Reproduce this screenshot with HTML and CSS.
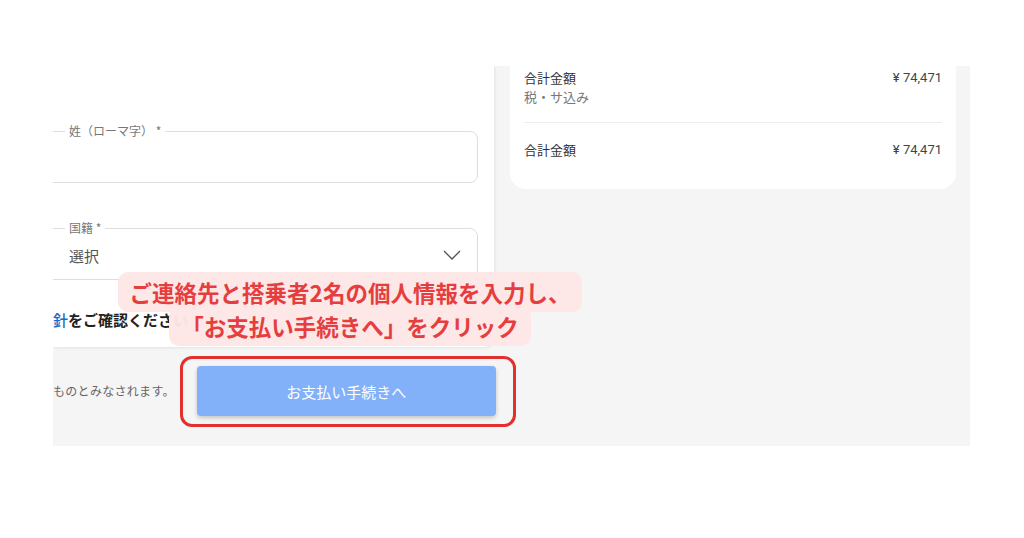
FILE: index.html
```html
<!DOCTYPE html>
<html lang="ja">
<head>
<meta charset="utf-8">
<title>お支払い手続き</title>
<link rel="stylesheet" href="styles.css">
</head>
<body>
<div class="shot">
  <div class="top-row">
    <div class="form-panel">
      <div class="field field-name">
        <span class="field-label">姓（ローマ字） *</span>
      </div>
      <div class="field field-select">
        <span class="field-label">国籍 *</span>
        <span class="select-value">選択</span>
        <svg class="chevron" width="18" height="10" viewBox="0 0 18 10"><path d="M1 1 L9 9 L17 1" fill="none" stroke="#555" stroke-width="1.4"/></svg>
      </div>
      <p class="policy"><span class="policy-link">針</span>をご確認ください</p>
    </div>
    <div class="summary-col">
      <div class="summary-card">
        <div class="sum-row">
          <div class="sum-label">
            <div>合計金額</div>
            <div class="sum-sub">税・サ込み</div>
          </div>
          <div class="sum-price">¥ 74,471</div>
        </div>
        <div class="sum-divider"></div>
        <div class="sum-row">
          <div class="sum-label">合計金額</div>
          <div class="sum-price">¥ 74,471</div>
        </div>
      </div>
    </div>
  </div>
  <div class="bottom-row">
    <span class="consent">ものとみなされます。</span>
    <div class="btn-wrap">
      <button class="pay-btn">お支払い手続きへ</button>
      <span class="highlight"></span>
    </div>
  </div>
  <div class="annotation">
    <span class="note">ご連絡先と搭乗者2名の個人情報を入力し、<br>「お支払い手続きへ」をクリック</span>
  </div>
</div>
</body>
</html>
```

FILE: styles.css
```css
* { box-sizing: border-box; }

html, body {
  margin: 0;
  padding: 0;
  background: #ffffff;
}

body {
  font-family: "Noto Sans CJK JP", "Noto Sans", sans-serif;
  color: #333;
}

.shot {
  position: relative;
  margin: 66px 0 0 53px;
  width: 917px;
  height: 380px;
  background: #f6f5f5;
  overflow: hidden;
}

.top-row {
  display: flex;
  height: 281px;
}

.form-panel {
  width: 441px;
  height: 281px;
  background: #fff;
  border-bottom-right-radius: 10px;
  box-shadow: 1px 1px 3px rgba(0, 0, 0, 0.08);
  padding-top: 65px;
  overflow: hidden;
}

.field {
  position: relative;
  height: 52px;
  margin-left: -15px;
  margin-right: 16px;
  border: 1px solid #dedede;
  border-radius: 8px;
}

.field-select {
  margin-top: 45px;
  display: flex;
  align-items: center;
  padding-left: 30px;
  padding-right: 16px;
}

.field-label {
  position: absolute;
  top: -10px;
  left: 26px;
  padding: 0 4px;
  background: #fff;
  font-size: 12px;
  line-height: 18px;
  color: #777;
}

.select-value {
  flex: 1;
  font-size: 15px;
  color: #555;
  padding-top: 2px;
}

.chevron {
  display: block;
  margin-top: 1px;
}

.policy {
  margin: 29px 0 0 0;
  font-size: 15px;
  line-height: 22px;
  font-weight: 700;
  color: #222;
  white-space: nowrap;
}

.policy-link {
  color: #1b6ac9;
  font-weight: 500;
}

.summary-col {
  margin-left: 16px;
}

.summary-card {
  width: 446px;
  height: 123px;
  background: #fff;
  border-radius: 0 0 16px 16px;
  padding: 2px 14px 0 14px;
}

.sum-row {
  display: flex;
  justify-content: space-between;
  align-items: flex-start;
  font-size: 13px;
  line-height: 19px;
  color: #333;
}

.sum-sub {
  color: #777;
}

.sum-price {
  font-family: Roboto, "Liberation Sans", sans-serif;
  color: #444;
}

.sum-divider {
  height: 1px;
  background: #ececec;
  margin: 16px 0 17px 0;
}

.bottom-row {
  display: flex;
  align-items: flex-start;
  height: 99px;
  padding-top: 19px;
}

.consent {
  font-size: 12px;
  letter-spacing: 0.3px;
  color: #666;
  line-height: 50px;
  white-space: nowrap;
}

.btn-wrap {
  position: relative;
  margin-left: 22px;
}

.pay-btn {
  display: block;
  width: 299px;
  height: 50px;
  border: none;
  border-radius: 4px;
  background: #82b1fa;
  color: #fff;
  font-family: "Noto Sans CJK JP", "Noto Sans", sans-serif;
  font-size: 15px;
  font-weight: 400;
  box-shadow: 0 2px 4px rgba(0, 0, 0, 0.2);
}

.highlight {
  position: absolute;
  top: -10px;
  left: -17px;
  right: -20px;
  bottom: -11px;
  border: 3px solid #e2302f;
  border-radius: 12px;
}

.annotation {
  position: absolute;
  left: 47px;
  top: 211px;
  width: 500px;
  text-align: center;
  line-height: 31px;
}

.note {
  font-size: 22.5px;
  font-weight: 700;
  color: #e63e3e;
  background: rgba(253, 230, 230, 0.97);
  padding: 4px 12px;
  border-radius: 10px;
  -webkit-box-decoration-break: clone;
  box-decoration-break: clone;
}
```
